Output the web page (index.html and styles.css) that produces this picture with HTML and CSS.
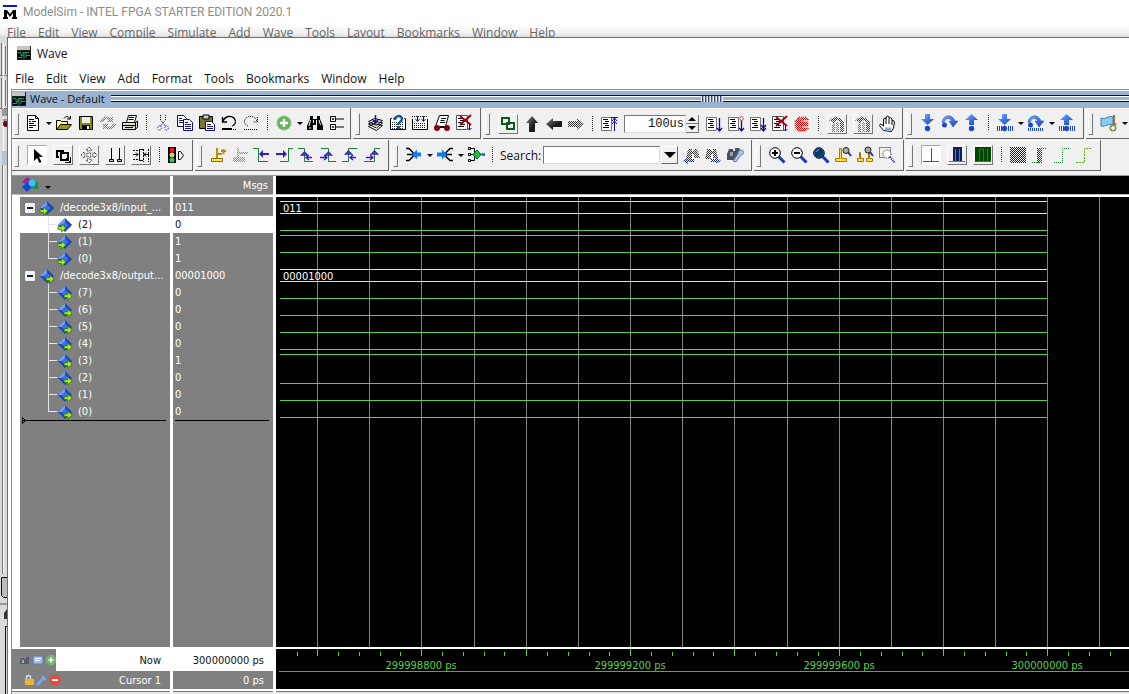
FILE: index.html
```html
<!DOCTYPE html>
<html lang="en">
<head>
<meta charset="utf-8">
<title>ModelSim - Wave</title>
<link rel="stylesheet" href="styles.css">
</head>
<body>
<svg class="defs" aria-hidden="true">
<defs>
<pattern id="dg" width="2" height="2" patternUnits="userSpaceOnUse"><path d="M0 0h1v1H0zM1 1h1v1H1z" fill="#333"/></pattern>
<pattern id="db" width="2" height="2" patternUnits="userSpaceOnUse"><path d="M0 0h1v1H0zM1 1h1v1H1z" fill="#0a1e78"/></pattern>
<pattern id="dr" width="2" height="2" patternUnits="userSpaceOnUse"><path d="M0 0h1v1H0zM1 1h1v1H1z" fill="#e00000"/></pattern>
<pattern id="dn" width="2" height="2" patternUnits="userSpaceOnUse"><path d="M0 0h1v1H0zM1 1h1v1H1z" fill="#2e9a3e"/></pattern>
<pattern id="dy" width="2" height="2" patternUnits="userSpaceOnUse"><path d="M0 0h1v1H0zM1 1h1v1H1z" fill="#b09800"/></pattern>
<linearGradient id="blue" x1="0" y1="0" x2="1" y2="1"><stop offset="0" stop-color="#78b0ff"/><stop offset="1" stop-color="#0a3cd0"/></linearGradient>
<linearGradient id="dark" x1="0" y1="0" x2="1" y2="1"><stop offset="0" stop-color="#888"/><stop offset=".6" stop-color="#1c1c1c"/></linearGradient>
</defs>
<symbol id="wave" viewBox="0 0 14 14"><path d="M0 0h14v14H0z" fill="#222"/><path d="M0 0h13v4H0z" fill="#c4c4c4"/><path d="M1 5h12v8H1z"/><path d="M1 6.500h3v3h2v-3h3M1 11.500h4v-2M7 6v7M9 9.500h4M9 12V6.500h3" fill="none" stroke="#2a9a68"/></symbol>
<symbol id="new" viewBox="0 0 18 18"><path d="M3.500 1.500h8l3 3v12h-11z" fill="#fff" stroke="#000"/><path d="M11.500 1.500v3h3M5 5.500h5M5 7.500h2M8 7.500h4M5 9.500h5M5 11.500h7M5 13.500h4" fill="none" stroke="#000"/></symbol>
<symbol id="open" viewBox="0 0 18 18"><path d="M1.500 15.500v-9h4l1 1h6v3" fill="#ffffa8" stroke="#000"/><path d="M1.500 15.500l4-5h11l-4 5z" fill="#9a9a10" stroke="#000"/><path d="M9 4.500c2-3 4-2 6 0M15.500 2v3H12" fill="none" stroke="#000"/></symbol>
<symbol id="save" viewBox="0 0 18 18"><path d="M2.500 2.500h13v13h-13z" fill="#8a8a10" stroke="#000"/><path d="M5 3h8v6H5z" fill="#eee"/><path d="M5 11h8v5H5z"/><path d="M10 12h2v3h-2z" fill="#fff"/></symbol>
<symbol id="reload" viewBox="0 0 18 18"><path d="M1 8c1-5 7-7 11-4l2-2v6H8l2-2c-3-2-5 0-6 2zM17 10c-1 5-7 7-11 4l-2 2v-6h6l-2 2c3 2 5 0 6-2z" fill="url(#dn)"/></symbol>
<symbol id="print" viewBox="0 0 18 18"><path d="M5.500 8.500l2-7h8l-2 7" fill="#fff" stroke="#000"/><path d="M8 3.500h5M7.500 5.500h5" stroke="#000"/><path d="M1.500 8.500h13l2-1.500v6l-2 2.500h-13z" fill="#ddd" stroke="#000"/><path d="M1.500 11.500h13M14.500 8v7M4 13.500h8" stroke="#000" fill="none"/><path d="M10 12h3v1h-3z" fill="#d0c000"/></symbol>
<symbol id="cut" viewBox="0 0 18 18"><path d="M6.500 1v5l5 6M11.500 1v5l-5 6" fill="none" stroke="#000" stroke-dasharray="1 1"/><ellipse cx="5.500" cy="14" rx="1.800" ry="2.300" fill="none" stroke="#1010c0" stroke-dasharray="1 1"/><ellipse cx="12.500" cy="14" rx="1.800" ry="2.300" fill="none" stroke="#1010c0" stroke-dasharray="1 1"/></symbol>
<symbol id="copy" viewBox="0 0 18 18"><path d="M1.500 1.500h6l3 3v8h-9z" fill="#fff" stroke="#101060"/><path d="M3 4.500h3M3 6.500h5M3 8.500h5" stroke="#101060"/><path d="M7.500 5.500h6l3 3v8h-9z" fill="#fff" stroke="#101080"/><path d="M9 8.500h3M9 10.500h6M9 12.500h6M9 14.500h6" stroke="#101080"/></symbol>
<symbol id="paste" viewBox="0 0 18 18"><path d="M1.500 2.500h13v12h-13z" fill="#77772a" stroke="#000"/><path d="M5 1h6v4H5z" fill="#ccc" stroke="#000"/><path d="M7.500 7.500h6l3 3v6h-9z" fill="#fff" stroke="#101080"/><path d="M9 10.500h4M9 12.500h6M9 14.500h6" stroke="#101080"/></symbol>
<symbol id="undo" viewBox="0 0 18 18"><path d="M3 7c2-5 8-6 11-3 3 4 1 7-2 8M2.500 3v5H7" fill="none" stroke="#000" stroke-width="1.300"/><path d="M2 15h10" stroke="#000" stroke-width="2"/><path d="M13 15.500h4" stroke="#000" stroke-dasharray="1 1"/></symbol>
<symbol id="redo" viewBox="0 0 18 18"><path d="M15 7c-2-5-8-6-11-3-3 4-1 7 2 8M15.500 3v5H11" fill="none" stroke="#000" stroke-dasharray="1 1"/><path d="M2 15.500h14" stroke="#000" stroke-dasharray="1 1"/></symbol>
<symbol id="plus" viewBox="0 0 18 18"><circle cx="9" cy="9" r="7" fill="#66b45c" stroke="#8cc488"/><path d="M9 5v8M5 9h8" stroke="#fff" stroke-width="2.400"/></symbol>
<symbol id="find" viewBox="0 0 18 18"><path d="M4 2h3v3h4V2h3v3l3 7v4h-6v-5H7v5H1v-4l3-7z"/><path d="M4.500 6L3 12M10.500 6v5M7.500 6v3M3 14h2M13 6l1.500 5" stroke="#fff" fill="none"/></symbol>
<symbol id="tree" viewBox="0 0 18 18"><path d="M2.500 2.500h5v5h-5zM2.500 10.500h5v5h-5z" fill="#fff" stroke="#000"/><path d="M4 5h2M5 4v2M4 13h2M5 12v2M8 5h8M8 13h8" stroke="#000"/></symbol>
<symbol id="compile" viewBox="0 0 18 18"><path d="M1.500 12.500l6-3 8 2-6 5zM1.500 10l6-3 8 2-6 5zM1.500 7.500l6-3 8 2-6 5z" fill="#fff" stroke="#000"/><path d="M8.500 1v7M6 6l2.500 3L11 6" stroke="#101090" stroke-width="1.500" fill="none"/></symbol>
<symbol id="ask" viewBox="0 0 18 18"><path d="M1.500 4.500v11h15v-11" fill="#fff" stroke="#000"/><path d="M3 8.500h12M3 10.500h12M3 12.500h12M3 14.500h12M2 4.500h3M13 4.500h3" stroke="#222" stroke-dasharray="1 1"/><path d="M6 6c0-5 7-5 7-1 0 3-4 3-4 6" fill="none" stroke="#0b5a98" stroke-width="2.500"/><path d="M8 12h3v3H8z" fill="#0b5a98"/></symbol>
<symbol id="all" viewBox="0 0 18 18"><path d="M1.500 5v10.500h15V5" fill="#fff" stroke="#000"/><path d="M3 9.500h12M3 11.500h12M3 13.500h12M1 2.500h16" stroke="#222" stroke-dasharray="1 1"/><path d="M6.500 2v5M4.500 5l2 2.500 2-2.500M12.500 2v5M10.500 5l2 2.500 2-2.500" stroke="#101090" fill="none"/></symbol>
<symbol id="sim" viewBox="0 0 18 18"><path d="M6.500 1.500h9l-3 11h-10z" fill="#fff" stroke="#000"/><path d="M8 4.500h5M7.500 6.500h4M7 8.500h5" stroke="#000"/><path d="M2 13h13" stroke="#000" stroke-width="2"/><circle cx="4" cy="14" r="3" fill="#800018"/><circle cx="14" cy="14" r="3" fill="#800018"/></symbol>
<symbol id="break" viewBox="0 0 18 18"><path d="M1.500 1.500h11v14h-11z" fill="#fff" stroke="#555"/><path d="M3 4.500h6M5 6.500h5M3 8.500h5M5 10.500h5M3 12.500h6" stroke="#000"/><path d="M5 2l11 9M16 1L5 11" stroke="#a00018" stroke-width="2"/><path d="M14.500 10v6M12.500 14l2 2 2-2" stroke="#101090" fill="none"/></symbol>
<symbol id="boxes" viewBox="0 0 18 18"><path d="M3 3h7v6H3zM8 8h7v6H8z" fill="none" stroke="#0a5a20" stroke-width="2"/></symbol>
<symbol id="up" viewBox="0 0 18 18"><path d="M9 1l6 7h-3v9H6V8H3z" fill="url(#dark)"/></symbol>
<symbol id="left" viewBox="0 0 18 18"><path d="M1 9l7-6v3h9v6H8v3z" fill="url(#dark)"/></symbol>
<symbol id="right" viewBox="0 0 18 18"><path d="M17 9l-7-6v3H1v6h9v3z" fill="url(#dg)"/></symbol>
<symbol id="page" viewBox="0 0 18 18"><path d="M1.500 2.500h10v13h-10z" fill="#fff" stroke="#777"/><path d="M3 4.500h5M5 6.500h4M3 8.500h5M5 10.500h4M3 12.500h6" stroke="#000"/></symbol>
<symbol id="restart" viewBox="0 0 18 18"><use href="#page"/><path d="M14.500 16V3M11 2.500h7M12 6l2.500-3L17 6M12 9l2.500-3L17 9" stroke="#101090" fill="none"/></symbol>
<symbol id="run" viewBox="0 0 18 18"><use href="#page"/><path d="M14.500 3v13M12 13l2.500 3 2.500-3" stroke="#101090" fill="none" stroke-width="1.300"/></symbol>
<symbol id="cont" viewBox="0 0 18 18"><use href="#run"/><path d="M14.500 1l2 2.500-2 2.500-2-2.500z" fill="#fff" stroke="#e03030"/></symbol>
<symbol id="runall" viewBox="0 0 18 18"><use href="#run"/><path d="M12 10l2.500 3 2.500-3" stroke="#101090" fill="none" stroke-width="1.300"/></symbol>
<symbol id="stop" viewBox="0 0 18 18"><path d="M6 2h7l3 3h-5l-4 2h8v4H7l4 2h5l-4 3H5l-3-4V6z" fill="url(#dr)" stroke="#e03020" stroke-dasharray="1 1"/></symbol>
<symbol id="prof" viewBox="0 0 18 18"><path d="M1 6l3-3h2l2-2 2 2h2l2 3-2 1-2-2-2 1-2 3-2-3z" fill="url(#dg)"/><path d="M4 9h3v8H4z" fill="url(#dn)"/><path d="M8 7h3v10H8z" fill="url(#dy)"/><path d="M12 4l4 3v10h-4z" fill="url(#dr)"/></symbol>
<symbol id="hand" viewBox="0 0 18 18"><path d="M5.500 15.500l-4-5 1-1.500 3 2V4l1.500-1L8 4V2l1.500-1L11 2v1.500l1.500-1L14 4v2l1.500-.5 1 1.500-1 6-2 3.500z" fill="#fff" stroke="#000"/><path d="M8 4v5M11 4v5M14 6v4" stroke="#000"/><path d="M7 14h6" stroke="#88a8d8" stroke-width="3"/></symbol>
<symbol id="sdown" viewBox="0 0 18 18"><path d="M6 0h5v5h4L8.500 11 2 5h4z" fill="url(#blue)"/><circle cx="8.500" cy="14.500" r="2.700" fill="#2046c8"/></symbol>
<symbol id="sover" viewBox="0 0 18 18"><path d="M1 8c1-7 10-9 13-1h3l-5 6-4-6h3C8 3 4 4 3 9z" fill="url(#blue)" stroke="#1648c0" stroke-width=".5"/><circle cx="3.500" cy="11" r="2.500" fill="#2046c8"/></symbol>
<symbol id="sup" viewBox="0 0 18 18"><path d="M6 11h5V6h4L8.500 0 2 6h4z" fill="url(#blue)"/><circle cx="8.500" cy="14.500" r="2.700" fill="#2046c8"/></symbol>
<symbol id="bars" viewBox="0 0 18 18"><path d="M1.500 12v5M3.500 12v5M5.500 12v5M12.500 12v5M14.500 12v5M16.500 12v5" stroke="#2046c8"/></symbol>
<symbol id="cdown" viewBox="0 0 18 18"><use href="#sdown"/><use href="#bars"/></symbol>
<symbol id="cover" viewBox="0 0 18 18"><use href="#sover"/><path d="M1 15.500h16" stroke="#2046c8" stroke-width="3" stroke-dasharray="1 1"/></symbol>
<symbol id="cup" viewBox="0 0 18 18"><use href="#sup"/><use href="#bars"/></symbol>
<symbol id="flag" viewBox="0 0 18 18"><path d="M14 1v13" stroke="#b07020" stroke-width="2"/><path d="M1 4c5 2 7-3 12-1v8c-5-2-7 2-12 1z" fill="#8cccf0" stroke="#3880b8"/><path d="M14 9l3 1-3 2z" fill="#c05020"/><circle cx="13" cy="14" r="3.500" fill="#7a9a4e"/><path d="M13 12v4M11 14h4" stroke="#fff" stroke-width="1.500"/></symbol>
<symbol id="ptr" viewBox="0 0 18 18"><path d="M6 3v12l3-3 2.500 5 2-1-2.500-5h4z"/></symbol>
<symbol id="zoommode" viewBox="0 0 18 18"><path d="M2 5h8M3 4v8M3 11h2" fill="none" stroke="#000" stroke-width="2"/><path d="M7 7h7v7H7z" fill="none" stroke="#000" stroke-width="2"/><path d="M11 16.500h6M16.500 11v6M12 12l4 4" stroke="#000"/></symbol>
<symbol id="pan" viewBox="0 0 18 18"><path d="M9 1l3 3h-2v4h4V6l3 3-3 3v-2h-4v4h2l-3 3-3-3h2v-4H4v2L1 9l3-3v2h4V4H6z" fill="#fff" stroke="#000" stroke-dasharray="1 1"/></symbol>
<symbol id="two" viewBox="0 0 18 18"><path d="M5.500 2v12M13.500 2v12M3.500 15.500v-2h4v2zM11.500 15.500v-2h4v2z" fill="#ccc" stroke="#000"/></symbol>
<symbol id="edit" viewBox="0 0 18 18"><path d="M1 4.500h6M1 13.500h6M11.500 3v13M16.500 3v13" stroke="#000" stroke-dasharray="2 1"/><path d="M7.500 3v12M1 8.500h5M12 8.500h5M4 6.500l2 2-2 2M14 6.500l-2 2 2 2M8 3.500h3M8 14.500h3" fill="none" stroke="#000"/></symbol>
<symbol id="light" viewBox="0 0 18 18"><path d="M1 1h8v16H1z"/><circle cx="5" cy="4" r="2.500" fill="#ff1010"/><circle cx="5" cy="9" r="2.500" fill="#d8c880"/><circle cx="5" cy="14" r="2.500" fill="#30c070"/><path d="M11.500 5.500v8h2l3-4-3-4z" fill="#fff" stroke="#000"/></symbol>
<symbol id="cadd" viewBox="0 0 18 18"><path d="M8 2v10M12 5h5M14.500 3v5M8 8h5" stroke="#b89000" stroke-width="2"/><path d="M2.500 12.500h11v3h-11z" fill="#ffe840" stroke="#8a6a00"/></symbol>
<symbol id="cdel" viewBox="0 0 18 18"><path d="M6 2h2v9H6zM8 6h9v2H8zM2 11h12v5H2z" fill="url(#dy)"/></symbol>
<symbol id="ep" viewBox="0 0 18 18"><path d="M0 2.500h5.500v13H15" fill="none" stroke="#188030"/><path d="M6 8l4-4v3h6v2h-6v3z" fill="#3818c0"/></symbol>
<symbol id="en" viewBox="0 0 18 18"><path d="M18 2.500h-4.500v13H5" fill="none" stroke="#188030"/><path d="M12 8L8 4v3H1v2h7v3z" fill="#3818c0"/></symbol>
<symbol id="fp" viewBox="0 0 18 18"><path d="M1 2.500h6.500v13H16" fill="none" stroke="#188030"/><path d="M7.500 6l3 3h-6zM15 11.500H9M12 9l-3 2.500 3 2.500" fill="none" stroke="#3818c0" stroke-width="1.300"/></symbol>
<symbol id="fn" viewBox="0 0 18 18"><path d="M2 2.500h7.500v13H17" fill="none" stroke="#188030"/><path d="M9.500 6l3 3h-6zM1 11.500h7M5 9l3 2.500L5 14" fill="none" stroke="#3818c0" stroke-width="1.300"/></symbol>
<symbol id="rp" viewBox="0 0 18 18"><path d="M1 15.500h6.500v-13H16" fill="none" stroke="#188030"/><path d="M7.500 5l3 3h-6zM15 11.500H9M12 9l-3 2.500 3 2.500" fill="none" stroke="#3818c0" stroke-width="1.300"/></symbol>
<symbol id="rn" viewBox="0 0 18 18"><path d="M1 15.500h10.500v-13H17" fill="none" stroke="#188030"/><path d="M11.500 5l3 3h-6zM3 11.500h7M7 9l3 2.500L7 14" fill="none" stroke="#3818c0" stroke-width="1.300"/></symbol>
<symbol id="drv" viewBox="0 0 18 18"><path d="M1 2.500h3l4 4v4l-4 4H1M2 8.500h5" fill="none" stroke="#000" stroke-width="1.500"/><path d="M7 8.500l5-5v3h4v4h-4v3z" fill="#1878f0"/></symbol>
<symbol id="rdr" viewBox="0 0 18 18"><path d="M17 2.500h-3l-4 4v4l4 4h3M10 8.500h6" fill="none" stroke="#000" stroke-width="1.500"/><path d="M11 8.500l-5-5v3H1v4h5v3z" fill="#1878f0"/></symbol>
<symbol id="net" viewBox="0 0 18 18"><path d="M2 2.500h5.500v12H2M2 8.500h14" fill="none" stroke="#000"/><path d="M1.500 1.500h2v2h-2zM1.500 7.500h2v2h-2zM1.500 13.500h2v2h-2z" fill="#fff" stroke="#000"/><path d="M15 7h3v3h-3z" fill="#1878f0"/><path d="M10 4l4 4.500-4 4.500-4-4.500z" fill="#20c030" stroke="#063"/></symbol>
<symbol id="fprev" viewBox="0 0 18 18"><path d="M6 3h4v2h2V3h3l3 9h-6V8h-2v5H4z" fill="url(#dg)"/><path d="M1 15l5-4v2h6v3H6v2z" fill="url(#db)"/></symbol>
<symbol id="fnext" viewBox="0 0 18 18"><path d="M3 3h4v2h2V3h3l2 9h-5V8H7v5H1z" fill="url(#dg)"/><path d="M17 15l-5-4v2H7v3h5v2z" fill="url(#db)"/></symbol>
<symbol id="fopt" viewBox="0 0 18 18"><path d="M3 3h4v2h2V2h4l3 5-5 7H1V8z" fill="#48505c"/><path d="M4 6h3v4H4z" fill="#90a0b0"/><path d="M16 4c3 1 2 5-1 5l-5 7-3-1 5-7c0-2 1-4 4-4z" fill="#a9c5e0" stroke="#6688aa"/></symbol>
<symbol id="glass" viewBox="0 0 18 18"><path d="M10.500 10.500l6 6" stroke="#1838b0" stroke-width="3"/><circle cx="7" cy="7" r="5.300" fill="#fff" stroke="#000"/></symbol>
<symbol id="zin" viewBox="0 0 18 18"><use href="#glass"/><path d="M4 7h6M7 4v6" stroke="#000" stroke-width="2"/></symbol>
<symbol id="zout" viewBox="0 0 18 18"><use href="#glass"/><path d="M4 7h6" stroke="#000" stroke-width="2"/></symbol>
<symbol id="zfull" viewBox="0 0 18 18"><use href="#glass"/><circle cx="7" cy="7" r="5" fill="#083c70"/><path d="M4 6c1-2 2-2 3-2" stroke="#7ab" fill="none"/></symbol>
<symbol id="zcur" viewBox="0 0 18 18"><path d="M5.500 2.500h2v10h5v3h-11v-3h4z" fill="#ffdc40" stroke="#a87800"/><path d="M14 6l3 4" stroke="#1838b0" stroke-width="2"/><circle cx="12" cy="4.500" r="3" fill="#aaa" stroke="#222"/></symbol>
<symbol id="zbet" viewBox="0 0 18 18"><path d="M3.500 6.500h1v6h3v3h-6v-3h2zM12.500 6.500h1v6h3v3h-6v-3h2z" fill="#ffdc40" stroke="#a87800"/><path d="M14 6l3 4" stroke="#1838b0" stroke-width="2"/><circle cx="12" cy="4" r="3" fill="#aaa" stroke="#222"/></symbol>
<symbol id="zsel" viewBox="0 0 18 18"><path d="M1.500 1.500h11v10h-11z" fill="none" stroke="#101090" stroke-dasharray="1 1"/><circle cx="9" cy="8" r="4" fill="#fff" stroke="#222" stroke-dasharray="1 1"/><path d="M12 11l5 6" stroke="#101090" stroke-width="2" stroke-dasharray="1 1"/></symbol>
<symbol id="w1" viewBox="0 0 18 18"><path d="M1 15.500h16M9.500 2v13" stroke="#188030"/></symbol>
<symbol id="w2" viewBox="0 0 18 18"><path d="M5 1h9v15H5z" fill="#0a1e60"/><path d="M1 15.500h16M7.500 15V3M11.500 3v12" stroke="#28a060"/></symbol>
<symbol id="w3" viewBox="0 0 18 18"><path d="M1 1h16v15H1z" fill="#004800"/><path d="M1 15.500h16M5.500 15V3h4v12M13.500 3v12" stroke="#188030" fill="none"/></symbol>
<symbol id="w4" viewBox="0 0 18 18"><path d="M1 1h16v16H1z" fill="url(#db)"/></symbol>
<symbol id="w5" viewBox="0 0 18 18"><path d="M6 2h5v15H6z" fill="url(#dg)"/><path d="M1 16.500h7M9.500 16V2.500H15" fill="none" stroke="#188030" stroke-dasharray="1 1"/></symbol>
<symbol id="w6" viewBox="0 0 18 18"><path d="M1 16.500h8.500v-14H16" fill="none" stroke="#188030" stroke-dasharray="1 1"/></symbol>
<symbol id="w7" viewBox="0 0 18 18"><path d="M1 16.500h8.500v-14H16" fill="none" stroke="#58b000" stroke-dasharray="2 1"/></symbol>
<symbol id="gem" viewBox="0 0 18 18"><path d="M9 1l8 8-8 8-8-8z" fill="#1c48b8"/><path d="M9 1v8H1z" fill="#79a0f0"/><path d="M9 5l4 4-4 4-4-4z" fill="#3a70f0"/></symbol>
<symbol id="gin" viewBox="0 0 18 18"><use href="#gem"/><path d="M1 11h4V8l5 4.500L5 17v-3H1z" fill="#a4f020" stroke="#2a6a08" stroke-width=".8"/></symbol>
<symbol id="gout" viewBox="0 0 18 18"><use href="#gem"/><path d="M8 11h4V8l5 4.500-5 4.500v-3H8z" fill="#a4f020" stroke="#2a6a08" stroke-width=".8"/></symbol>
</svg>

<div class="desktop">
<header class="back">
<h1><svg class="logo" viewBox="0 0 14 15" aria-hidden="true"><path d="M0 0h14v2H0z" fill="#1010d0"/><path d="M1 5h3l3 4 3-4h3v7h1v2H9v-2h1V8l-3 4-3-4v4h1v2H0v-2h1z"/></svg>ModelSim - INTEL FPGA STARTER EDITION 2020.1</h1>
<nav class="menu backmenu" aria-label="ModelSim menu"><button>File</button><button>Edit</button><button>View</button><button>Compile</button><button>Simulate</button><button>Add</button><button>Wave</button><button>Tools</button><button>Layout</button><button>Bookmarks</button><button>Window</button><button>Help</button></nav>
</header>
<div class="edge" aria-hidden="true"><svg width="8" height="656"><path d="M0 0h8v656H0z" fill="#dadada"/><path d="M1.500 5v32M5.500 8v28M0 37.500h7M1.500 40v30M5.500 42v26M0 70.500h7M2.500 118v418" stroke="#777" fill="none"/><path d="M7.500 0v656" stroke="#777"/><path d="M3 5h1v530H3z" fill="#fff"/><path d="M2 71h5v7H2zM3 81h4v5H3z" fill="#999"/><circle cx="6" cy="86" r="3" fill="#700018"/><path d="M2 113h5v14H2z" fill="#b8c4d6"/><path d="M7 539.500H1.500v18l2 2H7" fill="#bbb" stroke="#111"/><path d="M0 565h7v2H0z" fill="#999"/><path d="M4 575l3-4v10H4z" fill="#333"/><path d="M5.500 588v68M5 588.500h3" stroke="#111"/></svg></div>

<main class="window">
<h2 class="title"><svg class="ic14"><use href="#wave"/></svg>Wave</h2>
<nav class="menu" aria-label="Wave menu"><button>File</button><button>Edit</button><button>View</button><button>Add</button><button>Format</button><button>Tools</button><button>Bookmarks</button><button>Window</button><button>Help</button></nav>
<div class="body">
<div class="dock"><svg class="ic14"><use href="#wave"/></svg><span>Wave - Default</span><i class="rails"><i class="grab"></i></i></div>
<div class="bars">
<div class="bar">
<div class="grp tight"><button class="b" aria-label="New"><svg><use href="#new"/></svg></button><button class="caret" aria-label="New options"></button><button class="b" aria-label="Open"><svg><use href="#open"/></svg></button><button class="b" aria-label="Save"><svg><use href="#save"/></svg></button><button class="b" aria-label="Reload"><svg><use href="#reload"/></svg></button><button class="b" aria-label="Print"><svg><use href="#print"/></svg></button><i class="sep"></i><button class="b" aria-label="Cut"><svg><use href="#cut"/></svg></button><button class="b" aria-label="Copy"><svg><use href="#copy"/></svg></button><button class="b" aria-label="Paste"><svg><use href="#paste"/></svg></button><button class="b" aria-label="Undo"><svg><use href="#undo"/></svg></button><button class="b" aria-label="Redo"><svg><use href="#redo"/></svg></button><i class="sep"></i><button class="b" aria-label="Add"><svg><use href="#plus"/></svg></button><button class="caret" aria-label="Add options"></button><button class="b" aria-label="Find"><svg><use href="#find"/></svg></button><button class="b" aria-label="Expand"><svg><use href="#tree"/></svg></button></div>
<div class="grp"><button class="b" aria-label="Compile"><svg><use href="#compile"/></svg></button><button class="b" aria-label="Compile out of date"><svg><use href="#ask"/></svg></button><button class="b" aria-label="Compile all"><svg><use href="#all"/></svg></button><button class="b" aria-label="Simulate"><svg><use href="#sim"/></svg></button><button class="b" aria-label="Break"><svg><use href="#break"/></svg></button></div>
<div class="grp low"><button class="b f" aria-label="Environment"><svg><use href="#boxes"/></svg></button><button class="b" aria-label="Up"><svg><use href="#up"/></svg></button><button class="b" aria-label="Back"><svg><use href="#left"/></svg></button><button class="b" aria-label="Forward"><svg><use href="#right"/></svg></button><i class="sep"></i><button class="b" aria-label="Restart"><svg><use href="#restart"/></svg></button><input class="time" aria-label="Run length" value="100us"><span class="spin"><button aria-label="Increase"></button><button class="dn" aria-label="Decrease"></button></span><button class="b" aria-label="Run"><svg><use href="#run"/></svg></button><button class="b" aria-label="Continue"><svg><use href="#cont"/></svg></button><button class="b" aria-label="Run all"><svg><use href="#runall"/></svg></button><button class="b" aria-label="Break run"><svg><use href="#break"/></svg></button><button class="b" aria-label="Stop"><svg><use href="#stop"/></svg></button><i class="sep"></i><button class="b f" aria-label="Profile performance"><svg><use href="#prof"/></svg></button><button class="b f" aria-label="Profile memory"><svg><use href="#prof"/></svg></button><button class="b" aria-label="Pan"><svg><use href="#hand"/></svg></button></div>
<div class="grp"><button class="b" aria-label="Step into"><svg><use href="#sdown"/></svg></button><button class="b" aria-label="Step over"><svg><use href="#sover"/></svg></button><button class="b" aria-label="Step out"><svg><use href="#sup"/></svg></button><i class="sep"></i><button class="b" aria-label="Step into instance"><svg><use href="#cdown"/></svg></button><button class="caret" aria-label="Step into options"></button><button class="b" aria-label="Step over instance"><svg><use href="#cover"/></svg></button><button class="caret" aria-label="Step over options"></button><button class="b" aria-label="Step out instance"><svg><use href="#cup"/></svg></button></div>
<div class="grp last"><button class="b" aria-label="Add bookmark"><svg><use href="#flag"/></svg></button><button class="caret" aria-label="Bookmark options"></button></div>
</div>
<div class="bar">
<div class="grp"><button class="b f on" aria-label="Select mode"><svg><use href="#ptr"/></svg></button><button class="b f" aria-label="Zoom mode"><svg><use href="#zoommode"/></svg></button><button class="b f" aria-label="Pan mode"><svg><use href="#pan"/></svg></button><button class="b f" aria-label="Two cursor mode"><svg><use href="#two"/></svg></button><button class="b f" aria-label="Edit mode"><svg><use href="#edit"/></svg></button><i class="sep"></i><button class="b" aria-label="Stop drawing"><svg><use href="#light"/></svg></button></div>
<div class="grp"><button class="b" aria-label="Insert cursor"><svg><use href="#cadd"/></svg></button><button class="b" aria-label="Delete cursor"><svg><use href="#cdel"/></svg></button><button class="b" aria-label="Previous transition"><svg><use href="#ep"/></svg></button><button class="b" aria-label="Next transition"><svg><use href="#en"/></svg></button><button class="b" aria-label="Previous falling edge"><svg><use href="#fp"/></svg></button><button class="b" aria-label="Next falling edge"><svg><use href="#fn"/></svg></button><button class="b" aria-label="Previous rising edge"><svg><use href="#rp"/></svg></button><button class="b" aria-label="Next rising edge"><svg><use href="#rn"/></svg></button></div>
<div class="grp"><button class="b" aria-label="Drivers"><svg><use href="#drv"/></svg></button><button class="caret" aria-label="Driver options"></button><button class="b" aria-label="Readers"><svg><use href="#rdr"/></svg></button><button class="caret" aria-label="Reader options"></button><button class="b" aria-label="Net"><svg><use href="#net"/></svg></button><i class="sep"></i><label class="lbl" for="q">Search:</label><input id="q" class="search"><button class="drop" aria-label="Search history"></button><button class="b" aria-label="Search reverse"><svg><use href="#fprev"/></svg></button><button class="b" aria-label="Search forward"><svg><use href="#fnext"/></svg></button><button class="b" aria-label="Search options"><svg><use href="#fopt"/></svg></button></div>
<div class="grp"><button class="b" aria-label="Zoom in"><svg><use href="#zin"/></svg></button><button class="b" aria-label="Zoom out"><svg><use href="#zout"/></svg></button><button class="b" aria-label="Zoom full"><svg><use href="#zfull"/></svg></button><button class="b" aria-label="Zoom on cursor"><svg><use href="#zcur"/></svg></button><button class="b" aria-label="Zoom between cursors"><svg><use href="#zbet"/></svg></button><button class="b" aria-label="Zoom other"><svg><use href="#zsel"/></svg></button></div>
<div class="grp"><button class="b f on" aria-label="Expanded off"><svg><use href="#w1"/></svg></button><button class="b f" aria-label="Expanded delta"><svg><use href="#w2"/></svg></button><button class="b f" aria-label="Expanded events"><svg><use href="#w3"/></svg></button><i class="sep"></i><button class="b" aria-label="Expand all time"><svg><use href="#w4"/></svg></button><button class="b" aria-label="Expand at cursor"><svg><use href="#w5"/></svg></button><button class="b" aria-label="Collapse all time"><svg><use href="#w6"/></svg></button><button class="b" aria-label="Collapse at cursor"><svg><use href="#w7"/></svg></button></div>
</div>
</div>

<section class="view">
<div class="head names"><svg width="18" height="18" viewBox="0 0 18 18" aria-hidden="true"><path d="M6 1l5 4-4 4-6-3z" fill="#a02090"/><path d="M10 6h7v7h-5z" fill="#208a50"/><path d="M6 6l5 5-5 5-5-5z" fill="#1048d8"/><circle cx="11" cy="7" r="3.500" fill="#30c8f0"/></svg><button class="caret" aria-label="Object options"></button></div>
<div class="head msgs">Msgs</div>
<div class="head black"></div>

<ul class="pane names tree">
<li><button class="box" aria-label="Collapse"></button><svg><use href="#gin"/></svg>/decode3x8/input_...</li>
<li class="kid sel"><svg><use href="#gin"/></svg>(2)</li>
<li class="kid"><svg><use href="#gin"/></svg>(1)</li>
<li class="kid end"><svg><use href="#gin"/></svg>(0)</li>
<li><button class="box" aria-label="Collapse"></button><svg><use href="#gout"/></svg>/decode3x8/output...</li>
<li class="kid"><svg><use href="#gout"/></svg>(7)</li>
<li class="kid"><svg><use href="#gout"/></svg>(6)</li>
<li class="kid"><svg><use href="#gout"/></svg>(5)</li>
<li class="kid"><svg><use href="#gout"/></svg>(4)</li>
<li class="kid"><svg><use href="#gout"/></svg>(3)</li>
<li class="kid"><svg><use href="#gout"/></svg>(2)</li>
<li class="kid"><svg><use href="#gout"/></svg>(1)</li>
<li class="kid end"><svg><use href="#gout"/></svg>(0)</li>
<li class="rule"><svg viewBox="0 0 5 7"><path d="M.5.5v6l3-3z" fill="none" stroke="#000"/></svg></li>
</ul>
<ul class="pane vals">
<li>011</li><li class="sel">0</li><li>1</li><li>1</li><li>00001000</li><li>0</li><li>0</li><li>0</li><li>0</li><li>1</li><li>0</li><li>0</li><li>0</li><li class="rule"></li>
</ul>
<div class="pane black">
<svg class="plot" role="img" aria-label="Waveforms">
<path d="M41.500 0v2000M93.500 0v2000M145.500 0v2000M198.500 0v2000M250.500 0v2000M302.500 0v2000M354.500 0v2000M406.500 0v2000M458.500 0v2000M511.500 0v2000M563.500 0v2000M615.500 0v2000M667.500 0v2000M719.500 0v2000M771.500 0v2000M823.500 0v2000" stroke="#858585"/>
<path d="M4 4.500h767M4 16.500h767M4 72.500h767M4 84.500h767" stroke="#c4f0c4"/>
<path d="M4 33.500h767M4 38.500h767M4 55.500h767M4 101.500h767M4 118.500h767M4 135.500h767M4 152.500h767M4 157.500h767M4 186.500h767M4 203.500h767M4 220.500h767" stroke="#5cd048"/>
<text x="7" y="15">011</text><text x="7" y="83">00001000</text>
</svg>
</div>

<div class="foot names">
<div class="now"><span class="tools"><button aria-label="Find cursor"><svg viewBox="0 0 12 12"><path d="M2 4h3v1h2V3h3v7H1V7z" fill="#555e68"/><path d="M3 6h2v3H3z" fill="#aab"/></svg></button><button aria-label="Notes"><svg viewBox="0 0 12 12"><path d="M1 2h10v8H1z" fill="#9ec0f0" stroke="#5878a8"/><path d="M3 4.500h6M3 6.500h5" stroke="#fff"/></svg></button><button aria-label="Add cursor"><svg viewBox="0 0 18 18"><use href="#plus"/></svg></button></span><span>Now</span></div>
<div class="cur"><span class="tools shift"><button aria-label="Lock cursor"><svg viewBox="0 0 12 12"><path d="M3.500 6V3c0-2 4-2 4 0v3" fill="none" stroke="#ddd" stroke-width="1.500"/><path d="M2 5h9v6H2z" fill="#f0b030"/></svg></button><button aria-label="Configure cursor"><svg viewBox="0 0 12 12"><path d="M1 11l6-6M7 2v3h3" stroke="#78a8f0" stroke-width="2.500" fill="none"/></svg></button><button aria-label="Delete cursor"><svg viewBox="0 0 12 12"><circle cx="6" cy="6" r="5.500" fill="#e84840"/><path d="M3 6h6" stroke="#fff" stroke-width="2"/></svg></button></span><span>Cursor 1</span></div>
</div>
<div class="foot"><div class="now">300000000 ps</div><div class="cur">0 ps</div></div>
<div class="foot black">
<svg class="plot" role="img" aria-label="Timeline">
<path d="M41.500 0v7M145.500 0v7M250.500 0v7M354.500 0v7M458.500 0v7M563.500 0v7M667.500 0v7M771.500 0v7M21.500 3v4M62.500 3v4M83.500 3v4M104.500 3v4M124.500 3v4M166.500 3v4M187.500 3v4M208.500 3v4M228.500 3v4M271.500 3v4M292.500 3v4M313.500 3v4M333.500 3v4M375.500 3v4M396.500 3v4M417.500 3v4M437.500 3v4M479.500 3v4M500.500 3v4M521.500 3v4M542.500 3v4M584.500 3v4M605.500 3v4M626.500 3v4M646.500 3v4M688.500 3v4M709.500 3v4M730.500 3v4M750.500 3v4M792.500 3v4M813.500 3v4M834.500 3v4" stroke="#5cd048"/>
<path d="M3 22.500h4000" stroke="#858585"/>
<g class="times"><text x="145" y="20">299998800 ps</text><text x="354" y="20">299999200 ps</text><text x="563" y="20">299999600 ps</text><text x="771" y="20">300000000 ps</text></g>
</svg>
</div>
</section>
<div class="scrolls" aria-hidden="true"><i></i><i></i><i></i></div>
</div>
</main>
</div>
</body>
</html>
```
FILE: styles.css
```css
* { box-sizing: border-box; }
body { margin: 0; font-family: "Open Sans", "Noto Sans", sans-serif; font-size: 12px; color: #111; }
button { margin: 0; padding: 0; border: 0; background: none; font: inherit; color: inherit; }
ul { list-style: none; margin: 0; padding: 0; }
.defs { position: absolute; width: 0; height: 0; }
.desktop { position: relative; min-height: 100vh; overflow: hidden; background: #fff; }

.back { color: #8c8c8c; }
.back h1 { display: flex; align-items: center; gap: 6px; height: 24px; margin: 0; padding-left: 3px; font: 400 12px Roboto, sans-serif; }
.logo { width: 14px; height: 15px; }
.menu { display: flex; gap: 12px; padding-left: 7px; line-height: 17px; white-space: nowrap; }
.backmenu { height: 16px; color: #666; background: linear-gradient(#fff, #f0f0f0 60%, #ccc); }
.edge { position: absolute; top: 38px; left: 0; width: 8px; bottom: 0; overflow: hidden; }
.edge svg { display: block; }

.window { position: absolute; top: 37px; left: 7px; right: 0; bottom: 0; display: flex; flex-direction: column; border: solid #6e6e6e; border-width: 1px 0 0 1px; background: #fff; }
.title { display: flex; align-items: center; gap: 6px; height: 30px; margin: 0; padding-left: 9px; font-size: 12px; font-weight: 400; }
.ic14 { width: 14px; height: 14px; flex: none; }
.window > .menu { height: 20px; }
.body { flex: 1; display: flex; flex-direction: column; margin: 1px 0 0 3px; border: solid #888; border-width: 1px 0 0 1px; min-height: 0; }
.dock { display: flex; align-items: center; gap: 4px; height: 18px; padding-bottom: 2px; background: #99b4d1; font-size: 11px; border-top: 1px solid #fff; }
.rails { position: relative; flex: 1; height: 7px; margin-left: 2px; border: solid #111; border-width: 1px 0; background: linear-gradient(#fff 0 1px, #99b4d1 1px 4px, #fff 4px); }
.grab { position: absolute; left: 58%; top: 0; width: 22px; height: 6px; background: repeating-linear-gradient(90deg, #eef 0 1px, #446 1px 2px, #99b4d1 2px 3px); }

.bars { background: #f0f0f0; padding-bottom: 3px; }
.bar { display: flex; gap: 2px; height: 32px; overflow: hidden; }
.grp { position: relative; display: flex; flex: none; align-items: center; height: 31px; padding: 0 5px 0 12px; border: solid #666; border-width: 0 1px 1px 0; box-shadow: inset 1px 1px #fff; }
.grp.tight { padding: 0 2px 0 10px; }
.grp.low { padding: 2px 4px 0 12px; }
.grp.last { flex: 1 0 auto; border-right: 0; padding-right: 0; }
.grp::before { content: ""; position: absolute; left: 2px; top: 5px; bottom: 3px; width: 3px; border: solid #fff; border-width: 1px 1px 0 1px; border-right-color: #777; border-bottom: 1px solid #777; }
.b { display: flex; align-items: center; justify-content: center; width: 22px; height: 20px; flex: none; }
.b svg { width: 18px; height: 18px; flex: none; }
.b.f { width: 20px; margin: 0 3px; border: 1px solid; border-color: #fff #777 #777 #fff; }
.b.on { background: #fff; border-color: #aaa #fff #fff #aaa; }
.caret { width: 9px; height: 20px; flex: none; display: flex; align-items: center; justify-content: center; }
.caret::before { content: ""; border: 3px solid transparent; border-top-color: #000; border-bottom: 0; }
.sep { width: 11px; height: 16px; flex: none; background: repeating-linear-gradient(#222 0 1px, transparent 1px 2px) center / 1px 100% no-repeat; }
.time, .search { height: 18px; border: 1px solid; border-color: #777 #ddd #ddd #777; padding: 0 1px; background: #fff; }
.time { width: 62px; margin-left: 4px; text-align: right; font: 12px "Liberation Mono", monospace; color: #111; }
.spin { display: flex; flex-direction: column; width: 13px; margin-right: 4px; }
.spin button { display: flex; align-items: center; justify-content: center; height: 9px; border: solid; border-width: 0 1px 1px 0; border-color: #777; }
.spin button::before { content: ""; border: 4px solid transparent; border-bottom-color: #000; border-top: 0; }
.spin .dn::before { transform: rotate(180deg); }
.lbl { width: 45px; padding-left: 2px; font-size: 12px; }
.search { width: 117px; }
.drop { display: flex; align-items: center; justify-content: center; width: 17px; height: 18px; margin: 0 2px 0 1px; border: 1px solid; border-color: #fff #666 #666 #fff; }
.drop::before { content: ""; border: 6px solid transparent; border-top-color: #000; border-bottom: 0; }

.view { flex: 1; min-height: 0; display: grid; grid-template: 19px 1fr 40px / 158px 100px 1fr; gap: 2px 3px; background: #fff; border-top: 1px solid #999; font-family: "DejaVu Sans Condensed", "Noto Sans", sans-serif; font-size: 11px; color: #fff; }
.head { display: flex; align-items: center; background: #808080; border-bottom: 1px solid #bbb; }
.head.names { padding-left: 9px; gap: 4px; }
.head.names .caret { padding-top: 4px; }
.msgs { justify-content: flex-end; padding-right: 5px; }
.pane { background: #808080; min-height: 0; overflow: hidden; padding-top: 2px; }
.view .black { background: #000; }
.tree { border-left: 8px solid #fff; }
.pane li { display: flex; align-items: center; height: 17px; white-space: nowrap; }
.vals li { padding-left: 2px; }
.pane .sel { background: #fff; color: #111; }
.tree svg { width: 16px; height: 16px; margin-right: 5px; flex: none; }
.box { display: flex; align-items: center; justify-content: center; width: 10px; height: 10px; margin: 0 4px 0 5px; border: 1px solid #eee; border-radius: 1px; background: #f4f6fa; }
.box::before { content: ""; width: 6px; height: 2px; background: #123; }
.tree .kid { padding-left: 28px; }
.kid::before { content: ""; width: 9px; height: 17px; background: linear-gradient(#e4e4e4, #e4e4e4) 0 0 / 1px 100% no-repeat, linear-gradient(#e4e4e4, #e4e4e4) 0 8px / 100% 1px no-repeat; }
.kid.end::before { background-size: 1px 9px, 100% 1px; }
.pane .rule { height: 1px; background: #000; margin: 0 4px 0 2px; overflow: visible; }
.tree .rule svg { width: 5px; height: 7px; }
.pane.black { padding: 0; }
.plot { display: block; width: 100%; height: 100%; overflow: hidden; }
.plot text { fill: #fff; }
.plot .times text { fill: #5cd048; text-anchor: middle; }
.foot { display: flex; flex-direction: column; min-width: 0; overflow: hidden; }
.now, .cur { display: flex; align-items: center; justify-content: flex-end; padding-right: 9px; }
.now { height: 22px; color: #111; background: #fff; }
.cur { height: 18px; background: #808080; }
.names .now, .names .cur { justify-content: space-between; }
.tools { display: flex; align-items: center; gap: 1px; height: 100%; width: 44px; padding-left: 7px; background: #808080; }
.tools.shift { padding-left: 11px; width: 50px; }
.tools button { height: 12px; }
.tools svg { display: block; width: 12px; height: 12px; }
.scrolls { display: grid; grid-template-columns: 158px 100px 1fr; gap: 3px; height: 5px; padding-top: 2px; background: #fff; }
.scrolls i { background: #e8e8e8; border-top: 1px solid #777; }
```
